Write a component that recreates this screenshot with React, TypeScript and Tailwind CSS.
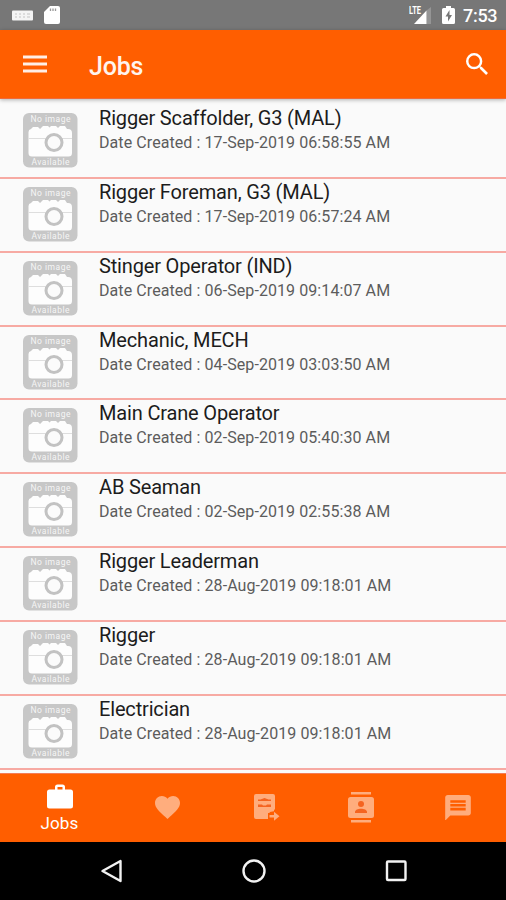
import type { ReactNode } from "react";

type Job = { title: string; date: string };

const jobs: Job[] = [
  { title: "Rigger Scaffolder, G3 (MAL)", date: "17-Sep-2019 06:58:55 AM" },
  { title: "Rigger Foreman, G3 (MAL)", date: "17-Sep-2019 06:57:24 AM" },
  { title: "Stinger Operator (IND)", date: "06-Sep-2019 09:14:07 AM" },
  { title: "Mechanic, MECH", date: "04-Sep-2019 03:03:50 AM" },
  { title: "Main Crane Operator", date: "02-Sep-2019 05:40:30 AM" },
  { title: "AB Seaman", date: "02-Sep-2019 02:55:38 AM" },
  { title: "Rigger Leaderman", date: "28-Aug-2019 09:18:01 AM" },
  { title: "Rigger", date: "28-Aug-2019 09:18:01 AM" },
  { title: "Electrician", date: "28-Aug-2019 09:18:01 AM" },
];

function StatusBar() {
  return (
    <div className="flex h-[30px] shrink-0 items-center bg-[#777777] pl-3 pr-[9px] text-white">
      <svg width="21" height="11" viewBox="0 0 21 11" className="mt-px">
        <rect width="21" height="10" y=".5" rx="1" fill="#f4f4f4" />
        <path d="M3 4h2m2 0h2m2 0h2m2 0h3M3 7h2m2 0h2m2 0h2m2 0h3" stroke="#c4c4c4" strokeWidth="1" />
      </svg>
      <svg width="16" height="20" viewBox="0 0 16 20" className="ml-[11px]" fill="#fff">
        <path d="M6 1h8a2 2 0 0 1 2 2v14a2 2 0 0 1-2 2H2a2 2 0 0 1-2-2V7z" />
        <path d="M6.500 3.500v2.500M9 3.500v2.500M11.500 3.500v2.500" stroke="#999" strokeWidth="1.3" />
      </svg>
      <div className="ml-auto flex items-center">
        <svg width="23" height="20" viewBox="0 0 23 20">
          <path d="M17.500 5.500 22 2v17h-4.500z" fill="#959595" />
          <path d="M5 19 17.500 5.500V19z" fill="#fff" />
          <text x="0" y="9" fontFamily="Roboto, sans-serif" fontSize="10" fontWeight="700" fill="#fff" textLength="12" lengthAdjust="spacingAndGlyphs">LTE</text>
        </svg>
        <svg width="13" height="20" viewBox="0 0 13 20" className="ml-[10px]">
          <path d="M4 1h5v2h2.500A1.500 1.500 0 0 1 13 4.500v13a1.500 1.500 0 0 1-1.500 1.500h-10A1.500 1.500 0 0 1 0 17.500v-13A1.500 1.500 0 0 1 1.500 3H4z" fill="#fff" />
          <path d="M7.500 5 3.500 11.500h2.500v5l4-6.500h-2.500z" fill="#777" />
        </svg>
        <span className="ml-[8px] mt-0.5 w-[34px] whitespace-nowrap text-[18px] font-medium leading-none tracking-[-0.3px]">7:53</span>
      </div>
    </div>
  );
}

function AppBar() {
  return (
    <header className="z-10 flex h-[69px] shrink-0 items-center border-b border-[#ef6a3a] bg-[#ff5e00] pl-[23px] pr-[18px] text-white shadow-[0_1px_4px_rgba(0,0,0,0.3)]">
      <svg width="24" height="18" viewBox="0 0 24 18" fill="#ffeee6">
        <path d="M0 .5h24v3H0zM0 7.500h24v3H0zM0 14.500h24v3H0z" />
      </svg>
      <h1 className="ml-[42px] mt-[4px] text-[25px] font-medium leading-none tracking-[-0.2px] text-[#fff4ee]">Jobs</h1>
      <svg width="22" height="22" viewBox="3 3 17.500 17.500" fill="#fff" className="ml-auto">
        <path d="M15.500 14h-.79l-.28-.27A6.471 6.471 0 0 0 16 9.500 6.500 6.500 0 1 0 9.500 16c1.610 0 3.090-.59 4.230-1.570l.27.28v.79l5 4.990L20.490 19l-4.990-5zm-6 0C7.010 14 5 11.990 5 9.500S7.010 5 9.500 5 14 7.010 14 9.500 11.990 14 9.500 14z" />
      </svg>
    </header>
  );
}

function NoImage() {
  return (
    <svg width="55" height="55" viewBox="0 0 55 55" className="mt-[8px] shrink-0">
      <rect width="54.500" height="54.500" rx="6" fill="#c7c7c7" />
      <g fill="#f6f6f6" fontFamily="Roboto, sans-serif" fontSize="8.500" textAnchor="middle">
        <text x="27.500" y="9" textLength="40">No image</text>
        <text x="27.500" y="51.500" textLength="38">Available</text>
      </g>
      <path d="M8 16 10 14h5l2 2 3-3h5l1.500 1.500L28 13h5l2 2 2-2h5l2 3h1a4 4 0 0 1 4 4v20a3.500 3.500 0 0 1-3.500 3.500H9a3.500 3.500 0 0 1-3.500-3.500V19a3 3 0 0 1 2.500-3z" fill="#fdfdfd" />
      <path d="M5.500 25.500h17M38 25.500h11" stroke="#dedede" />
      <circle cx="31" cy="29.500" r="8" fill="#fbfbfb" stroke="#c2c2c2" strokeWidth="3" />
    </svg>
  );
}

function JobRow({ job }: { job: Job }) {
  return (
    <li className="flex h-[73.850px] shrink-0 border-b-2 border-[#f7aaa3] pl-[23px]">
      <NoImage />
      <div className="ml-[21px] mt-px whitespace-nowrap">
        <p className="h-[25px] text-[20px] leading-[25px] tracking-[-0.160px] text-[#1c1c1c]">{job.title}</p>
        <p className="text-[16px] leading-[23px] tracking-[0.080px] text-[#5c5c5c]">Date Created : {job.date}</p>
      </div>
    </li>
  );
}

function Tab({ children, active = false }: { children: ReactNode; active?: boolean }) {
  return (
    <div className={active ? "flex w-[118px] flex-col items-center pt-[10px]" : "flex w-[97px] items-center justify-center pb-[2px]"}>
      {children}
    </div>
  );
}

function BottomTabs() {
  return (
    <nav className="flex h-[69px] shrink-0 border-t border-[#f47c55] bg-[#ff5e00] text-white">
      <Tab active>
        <svg width="26" height="25" viewBox="0 0 26 25" fill="#fff" className="ml-px">
          <path fillRule="evenodd" d="M8 5.500V3a2.500 2.500 0 0 1 2.500-2.500h5A2.500 2.500 0 0 1 18 3v2.500h5.500a2.500 2.500 0 0 1 2.500 2.500v14a2.500 2.500 0 0 1-2.500 2.500h-21A2.500 2.500 0 0 1 0 22V8a2.500 2.500 0 0 1 2.500-2.500zm2.500 0h5V3h-5z" />
        </svg>
        <span className="ml-px mt-1 text-[17px] leading-[20px] tracking-[0.2px]">Jobs</span>
      </Tab>
      <Tab>
        <svg width="25" height="23" viewBox="2 3 20 18.350" fill="#ffad7d" className="ml-px">
          <path d="m12 21.350-1.450-1.320C5.400 15.360 2 12.280 2 8.500 2 5.420 4.420 3 7.500 3c1.740 0 3.410.81 4.500 2.090C13.090 3.810 14.760 3 16.500 3 19.580 3 22 5.420 22 8.500c0 3.780-3.400 6.860-8.550 11.540z" />
        </svg>
      </Tab>
      <Tab>
        <svg width="26" height="28" viewBox="0 0 26 28" fill="#ffad7d" className="ml-[6px]">
          <path d="M2 1h17a2 2 0 0 1 2 2v15l-5 1-2 3v4H2a2 2 0 0 1-2-2V3a2 2 0 0 1 2-2z" />
          <path d="M4 8V6.500h2.500L10.500 5l4 1.500H17V8zM4 11.500h4l1 1h3l1-1h4v2.500H4z" fill="#f56420" />
          <path d="M14 20h6v-4l6 7-6 5v-3h-6z" fill="#ff5e00" />
          <path d="M15.500 22h4.500v-3.200l5.500 4.500-5.500 4.500v-3.200h-4.500z" />
        </svg>
      </Tab>
      <Tab>
        <svg width="26" height="31" viewBox="0 0 26 31" fill="#ffad7d">
          <path d="M3 0h20v2.500H3zM3 28h20v2.500H3z" />
          <rect y="5" width="26" height="21" rx="2.500" />
          <circle cx="13" cy="12" r="3" fill="#f56420" />
          <path d="M7 21v-1c0-4.500 12-4.500 12 0v1z" fill="#f56420" />
        </svg>
      </Tab>
      <Tab>
        <svg width="26" height="25" viewBox="2 2 20 19.500" fill="#ffad7d">
          <path d="M20 2H4c-1.100 0-1.990.9-1.990 2L2 22l4-4h14c1.100 0 2-.9 2-2V4c0-1.100-.9-2-2-2zm-2 12H6v-2h12v2zm0-3H6V9h12v2zm0-3H6V6h12v2z" />
        </svg>
      </Tab>
    </nav>
  );
}

function SystemNav() {
  return (
    <div className="flex h-[58px] shrink-0 items-center justify-between bg-black pl-[100px] pr-[98px]">
      <svg width="24" height="26" viewBox="0 0 24 26" fill="none" stroke="#f2f2f2" strokeWidth="2.400">
        <path d="M20.500 3v20L2.500 13z" strokeLinejoin="round" />
      </svg>
      <svg width="26" height="26" viewBox="0 0 26 26" fill="none" stroke="#f2f2f2" strokeWidth="2.400">
        <circle cx="13" cy="13" r="10.500" />
      </svg>
      <svg width="24" height="26" viewBox="0 0 24 26" fill="none" stroke="#f2f2f2" strokeWidth="2.400">
        <rect x="3" y="3.500" width="18.500" height="18.500" rx="1" />
      </svg>
    </div>
  );
}

export default function App() {
  return (
    <div className="flex h-[900px] w-[506px] flex-col overflow-hidden bg-[#fafafa] font-[Roboto,sans-serif]">
      <StatusBar />
      <AppBar />
      <ul className="flex h-[674px] shrink-0 flex-col pt-[6px]">
        {jobs.map((job) => (
          <JobRow key={job.title} job={job} />
        ))}
      </ul>
      <BottomTabs />
      <SystemNav />
    </div>
  );
}
